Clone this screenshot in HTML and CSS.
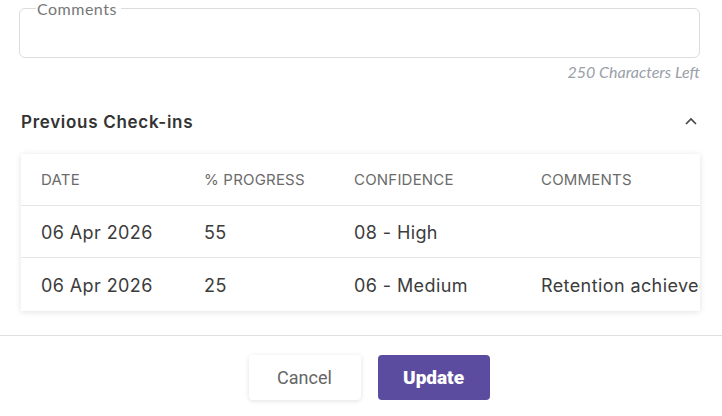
FILE: index.html
```html
<!DOCTYPE html>
<html>
<head>
<meta charset="utf-8">
<link rel="stylesheet" href="styles.css">
</head>
<body>
<div class="page">
  <fieldset class="comments">
    <legend>Comments</legend>
  </fieldset>
  <div class="counter">250 Characters Left</div>

  <div class="section-head">
    <h3>Previous Check-ins</h3>
    <svg class="chev" width="14" height="10" viewBox="0 0 14 10"><path d="M2 8 L7 3 L12 8" fill="none" stroke="#444" stroke-width="1.6"/></svg>
  </div>

  <div class="card">
    <div class="table">
      <div class="row head">
        <div class="c1">DATE</div><div class="c2">% PROGRESS</div><div class="c3">CONFIDENCE</div><div class="c4">COMMENTS</div>
      </div>
      <div class="row">
        <div class="c1">06 Apr 2026</div><div class="c2">55</div><div class="c3">08 - High</div><div class="c4"></div>
      </div>
      <div class="row last">
        <div class="c1">06 Apr 2026</div><div class="c2">25</div><div class="c3">06 - Medium</div><div class="c4">Retention achieved</div>
      </div>
    </div>
  </div>
</div>
<div class="footer">
  <button class="btn cancel">Cancel</button>
  <button class="btn update">Update</button>
</div>
</body>
</html>
```
FILE: styles.css
```css
* { box-sizing: border-box; }
html, body { margin: 0; padding: 0; background: #fff; }
body { width: 722px; height: 416px; overflow: hidden; font-family: "Inter", sans-serif; }
.page { padding: 0 22px 0 19px; }
.comments {
  margin: 0;
  height: 58px;
  border: 1px solid #dcdcdc;
  border-radius: 6px;
  padding: 0 16px;
}
.comments legend {
  font-family: "Lato", sans-serif;
  font-size: 16px;
  letter-spacing: 0.5px;
  color: #777;
  padding: 0 4px 0 1px;
  line-height: 17px;
}
.counter {
  text-align: right;
  font-family: "Lato", sans-serif;
  font-style: italic;
  font-size: 16px;
  color: #9aa0a8;
  margin-top: 5px;
  line-height: 18px;
}
.section-head {
  display: flex; align-items: center; justify-content: space-between;
  margin-top: 31px;
  padding-left: 2px; padding-right: 2px;
}
.section-head h3 {
  margin: 0; font-size: 17px; font-weight: 600; color: #333; line-height: 20px; letter-spacing: 0.7px;
}
.chev { margin-right: 0; margin-top: -2px; }
.card {
  margin-top: 22px; margin-left: 2px;
  background: #fff;
  box-shadow: 0 1px 6px rgba(0,0,0,0.12);
  overflow: hidden;
  width: 679px;
}
.table { width: 760px; }
.row { display: flex; height: 52px; align-items: center; border-bottom: 1px solid #e6e6e6; font-size: 18px; color: #3c3c3c; letter-spacing: 0.4px; padding-top: 1px; }
.row.last { border-bottom: none; height: 53px; }
.row.head { font-size: 15px; color: #6b6b6b; font-weight: 400; letter-spacing: 0.2px; padding-top: 0; }
.c1 { width: 183px; padding-left: 20px; }
.c2 { width: 150px; }
.c3 { width: 187px; }
.c4 { white-space: nowrap; }
.footer {
  position: absolute; left: 0; top: 335px; width: 722px;
  border-top: 1px solid #e0e0e0;
  display: flex; justify-content: center; gap: 17px;
  padding-top: 19px; padding-left: 16px;
}
.btn {
  width: 112px; height: 45px; border-radius: 4px; border: none;
  font-family: "Roboto", sans-serif; font-size: 18px; cursor: pointer;
}
.cancel { background: #fff; color: #666; box-shadow: 0 1px 5px rgba(0,0,0,0.12); }
.update { background: #5b4c9f; color: #fff; font-weight: 900; font-size: 19px; }
```
